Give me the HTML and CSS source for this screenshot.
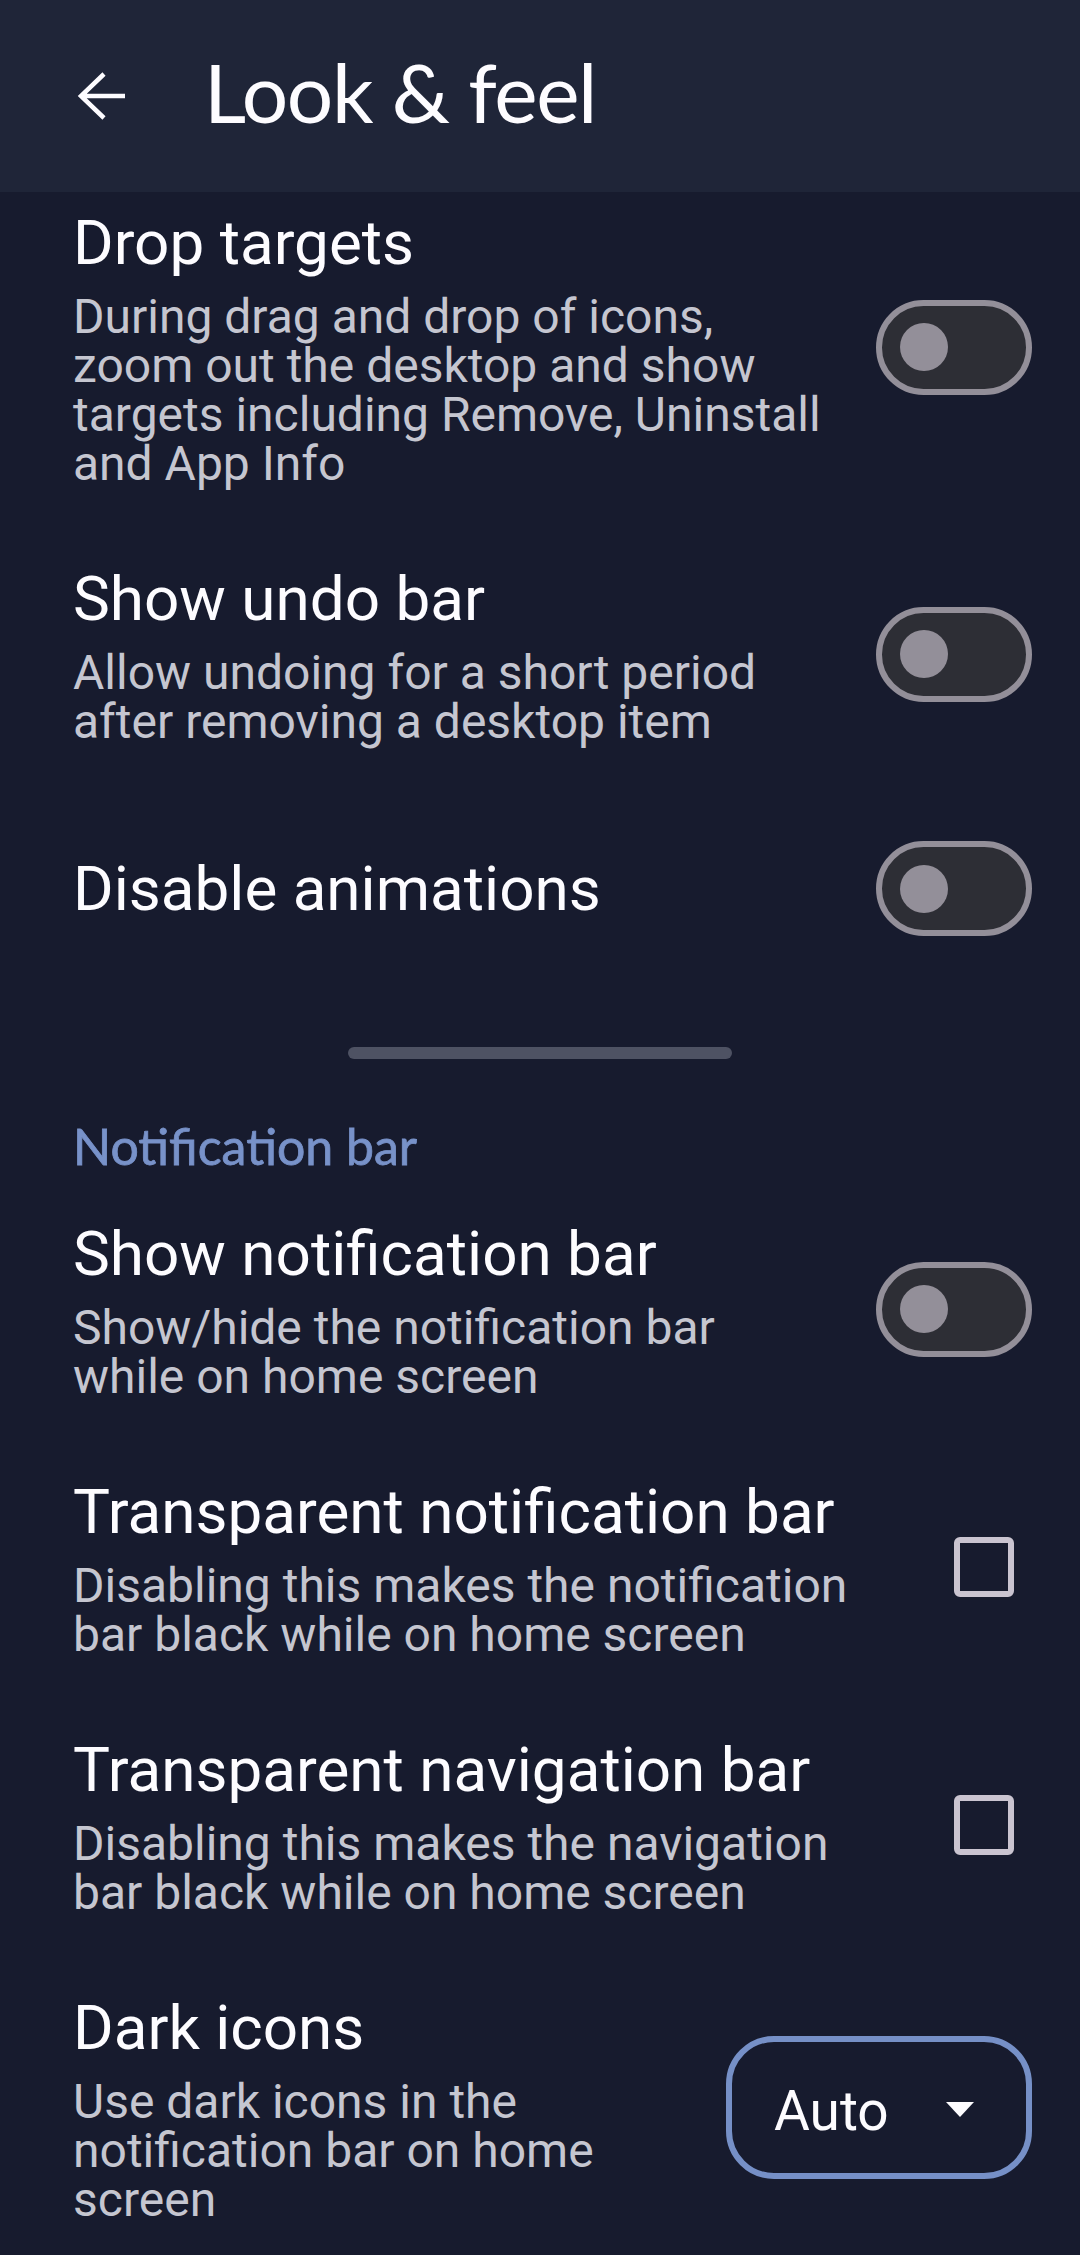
FILE: index.html
```html
<!DOCTYPE html>
<html lang="en">
<head>
  <meta charset="UTF-8" />
  <title>Look &amp; feel</title>
  <link rel="stylesheet" href="styles.css">
</head>
<body>

  <header class="toolbar">
    <svg class="back" width="50" height="50" viewBox="0 0 50 50">
      <path d="M48 25H4M27 3L4 25L27 47" fill="none" stroke="#fdfcff" stroke-width="4.5" />
    </svg>
    <h1 class="toolbar-title">Look &amp; feel</h1>
  </header>

  <main class="prefs">
    <div class="pref pref-first">
      <div class="pref-text">
        <div class="pref-title">Drop targets</div>
        <div class="pref-summary">During drag and drop of icons, zoom out the desktop and show targets including Remove, Uninstall and App Info</div>
      </div>
      <div class="switch"><span class="thumb"></span></div>
    </div>

    <div class="pref">
      <div class="pref-text">
        <div class="pref-title">Show undo bar</div>
        <div class="pref-summary">Allow undoing for a short period after removing a desktop item</div>
      </div>
      <div class="switch"><span class="thumb"></span></div>
    </div>

    <div class="pref pref-single">
      <div class="pref-text">
        <div class="pref-title">Disable animations</div>
      </div>
      <div class="switch"><span class="thumb"></span></div>
    </div>

    <div class="divider"></div>

    <div class="category">Notification bar</div>

    <div class="pref">
      <div class="pref-text">
        <div class="pref-title">Show notification bar</div>
        <div class="pref-summary">Show/hide the notification bar while on home screen</div>
      </div>
      <div class="switch"><span class="thumb"></span></div>
    </div>

    <div class="pref">
      <div class="pref-text">
        <div class="pref-title">Transparent notification bar</div>
        <div class="pref-summary">Disabling this makes the notification bar black while on home screen</div>
      </div>
      <div class="checkbox"></div>
    </div>

    <div class="pref">
      <div class="pref-text">
        <div class="pref-title">Transparent navigation bar</div>
        <div class="pref-summary">Disabling this makes the navigation bar black while on home screen</div>
      </div>
      <div class="checkbox"></div>
    </div>

    <div class="pref">
      <div class="pref-text">
        <div class="pref-title">Dark icons</div>
        <div class="pref-summary">Use dark icons in the notification bar on home screen</div>
      </div>
      <div class="dropdown">
        <span class="dropdown-value">Auto</span>
        <svg class="caret" width="28" height="15" viewBox="0 0 28 15">
          <polygon points="0,0 28,0 14,15" fill="#fdfcff" />
        </svg>
      </div>
    </div>
  </main>

</body>
</html>
```

FILE: styles.css
```css
body {
  margin: 0;
  background: #171b2e;
  font-family: Roboto, "Liberation Sans", sans-serif;
  color: #fdfcff;
}

.toolbar {
  height: 192px;
  display: flex;
  align-items: center;
  padding-left: 77px;
  background: #1f2538;
}

.back {
  flex-shrink: 0;
}

.toolbar-title {
  margin: 0 0 0 77px;
  padding-bottom: 10px;
  font-family: Lato, "Open Sans", sans-serif;
  font-weight: 400;
  font-size: 82px;
  letter-spacing: -1.4px;
  line-height: 1;
}

.pref {
  display: flex;
  align-items: center;
  padding: 37px 48px 37px 73px;
}

.pref-first {
  padding-top: 14px;
}

.pref-single {
  padding-top: 58px;
  padding-bottom: 58px;
}

.pref-text {
  flex: 1;
  min-width: 0;
}

.pref-title {
  font-size: 62px;
  line-height: 74px;
}

.pref-summary {
  margin-top: 12px;
  font-size: 48px;
  line-height: 49px;
  color: #c5c6d0;
}

.switch {
  flex-shrink: 0;
  display: flex;
  align-items: center;
  box-sizing: border-box;
  width: 156px;
  height: 95px;
  margin-left: 49px;
  padding-left: 18px;
  border: 6px solid #938f99;
  border-radius: 48px;
  background: #2d2e35;
}

.thumb {
  width: 48px;
  height: 48px;
  border-radius: 50%;
  background: #938f99;
}

.checkbox {
  flex-shrink: 0;
  box-sizing: border-box;
  width: 60px;
  height: 60px;
  margin: 0 18px 0 76px;
  border: 6px solid #cac4d0;
  border-radius: 6px;
}

.dropdown {
  flex-shrink: 0;
  display: flex;
  align-items: center;
  justify-content: space-between;
  box-sizing: border-box;
  width: 306px;
  height: 143px;
  margin-left: 50px;
  padding: 0 52px 0 42px;
  border: 6px solid #7690c7;
  border-radius: 48px;
}

.dropdown-value {
  padding-top: 7px;
  font-size: 55px;
}

.caret {
  margin-top: 4px;
}

.divider {
  width: 384px;
  height: 12px;
  margin: 53px auto 0;
  border-radius: 6px;
  background: #4e5263;
}

.category {
  margin: 57px 0 4px;
  padding: 0 73px;
  font-family: Lato, "Open Sans", sans-serif;
  font-weight: 400;
  font-size: 50px;
  line-height: 60px;
  color: #7892c9;
  -webkit-text-stroke: 0.8px #7892c9;
}
```
